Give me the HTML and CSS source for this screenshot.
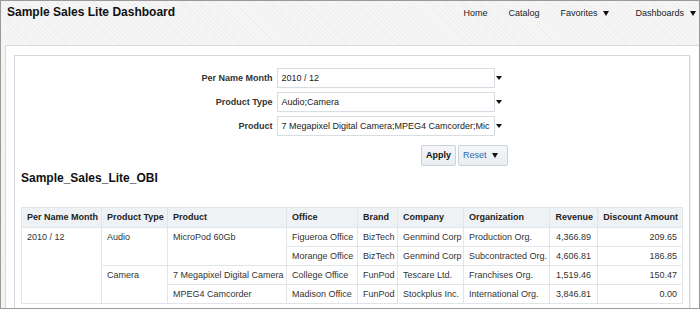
FILE: index.html
```html
<!DOCTYPE html>
<html lang="en">
<head>
    <meta charset="UTF-8">
    <title>Sample Sales Lite Dashboard</title>
    <link rel="stylesheet" href="styles.css">
</head>
<body>
    <div class="frame">
        <div class="header">
            <div class="title">Sample Sales Lite Dashboard</div>
            <div class="nav">
                <span>Home</span>
                <span>Catalog</span>
                <span>Favorites<i class="caret"></i></span>
                <span class="last">Dashboards<i class="caret"></i></span>
            </div>
        </div>

        <div class="panel">
            <div class="box">
                <div class="prompts">
                    <div class="label">Per Name Month</div>
                    <div class="select">2010 / 12</div>
                    <div class="arrow"><i class="caret"></i></div>

                    <div class="label">Product Type</div>
                    <div class="select">Audio;Camera</div>
                    <div class="arrow"><i class="caret"></i></div>

                    <div class="label">Product</div>
                    <div class="select">7 Megapixel Digital Camera;MPEG4 Camcorder;Mic</div>
                    <div class="arrow"><i class="caret"></i></div>

                    <div class="buttons">
                        <span class="button apply">Apply</span>
                        <span class="button reset">Reset<i class="caret"></i></span>
                    </div>
                </div>

                <div class="report-title">Sample_Sales_Lite_OBI</div>

                <table class="pivot">
                    <colgroup>
                        <col style="width: 80px">
                        <col style="width: 66px">
                        <col style="width: 119px">
                        <col style="width: 71px">
                        <col style="width: 40px">
                        <col style="width: 66px">
                        <col style="width: 86px">
                        <col style="width: 48px">
                        <col style="width: 85px">
                    </colgroup>
                    <tr>
                        <th>Per Name Month</th>
                        <th>Product Type</th>
                        <th>Product</th>
                        <th>Office</th>
                        <th>Brand</th>
                        <th>Company</th>
                        <th>Organization</th>
                        <th class="num">Revenue</th>
                        <th class="num">Discount Amount</th>
                    </tr>
                    <tr>
                        <td rowspan="4" class="top">2010 / 12</td>
                        <td rowspan="2" class="top">Audio</td>
                        <td rowspan="2" class="top">MicroPod 60Gb</td>
                        <td>Figueroa Office</td>
                        <td>BizTech</td>
                        <td>Genmind Corp</td>
                        <td>Production Org.</td>
                        <td class="num rev">4,366.89</td>
                        <td class="num">209.65</td>
                    </tr>
                    <tr>
                        <td>Morange Office</td>
                        <td>BizTech</td>
                        <td>Genmind Corp</td>
                        <td>Subcontracted Org.</td>
                        <td class="num rev">4,606.81</td>
                        <td class="num">186.85</td>
                    </tr>
                    <tr>
                        <td rowspan="2" class="top">Camera</td>
                        <td>7 Megapixel Digital Camera</td>
                        <td>College Office</td>
                        <td>FunPod</td>
                        <td>Tescare Ltd.</td>
                        <td>Franchises Org.</td>
                        <td class="num rev">1,519.46</td>
                        <td class="num">150.47</td>
                    </tr>
                    <tr>
                        <td>MPEG4 Camcorder</td>
                        <td>Madison Office</td>
                        <td>FunPod</td>
                        <td>Stockplus Inc.</td>
                        <td>International Org.</td>
                        <td class="num rev">3,846.81</td>
                        <td class="num">0.00</td>
                    </tr>
                </table>
            </div>
        </div>
    </div>
</body>
</html>
```

FILE: styles.css
```css
body {
    margin: 0;
    font-family: "Liberation Sans", Arial, sans-serif;
    font-size: 9px;
    color: #333;
}
.frame {
    width: 700px;
    height: 309px;
    box-sizing: border-box;
    border: 1px solid #9a9a9a;
    overflow: hidden;
    background-color: #f4f4f4;
    background-image: repeating-linear-gradient(45deg, #efefef 0, #efefef 1px, #f6f6f6 1px, #f6f6f6 3px);
}
.header {
    height: 44px;
    box-sizing: border-box;
    padding: 4px 0 0 6px;
    display: flex;
    align-items: baseline;
    justify-content: space-between;
}
.title {
    font-size: 12px;
    line-height: 15px;
    font-weight: bold;
    color: #111;
}
.nav {
    display: flex;
    gap: 21px;
    line-height: 12px;
    color: #222;
    padding-right: 3px;
}
.nav .last {
    margin-left: 5px;
}
.caret {
    display: inline-block;
    width: 0;
    height: 0;
    border-left: 3.5px solid transparent;
    border-right: 3.5px solid transparent;
    border-top: 5px solid #111;
    margin-left: 6px;
    vertical-align: 0;
}
.panel {
    margin-left: 4px;
    height: 300px;
    background: #fff;
    border-top: 1px solid #d3dbe4;
    border-left: 1px solid #d3dbe4;
    overflow: hidden;
}
.box {
    margin: 9px 9px 0 8px;
    padding: 12px 6px 6px 6px;
    border: 1px solid #d2d9e0;
    box-shadow: 1px 1px 0 #e7ecf1;
    background: #fff;
}
.prompts {
    width: 311px;
    margin: 0 auto;
    display: grid;
    grid-template-columns: 76px 218px 9px;
    grid-template-rows: 20px 20px 20px auto;
    column-gap: 4px;
    row-gap: 4px;
}
.prompts .arrow {
    margin-left: -4px;
    width: 13px;
    display: flex;
    align-items: center;
}
.prompts .arrow .caret {
    margin-left: 1px;
    border-top-width: 4.5px;
}
.label {
    text-align: right;
    font-weight: bold;
    line-height: 20px;
    white-space: nowrap;
    color: #333;
}
.select {
    box-sizing: border-box;
    border: 1px solid #d7dde3;
    padding-left: 4px;
    line-height: 18px;
    white-space: nowrap;
    overflow: hidden;
    color: #222;
}
.buttons {
    grid-column: 1 / 4;
    display: flex;
    justify-content: flex-end;
    gap: 2px;
    margin-top: 5px;
}
.button {
    box-sizing: border-box;
    height: 21px;
    line-height: 19px;
    border: 1px solid #cbd2d9;
    border-radius: 2px;
    background: linear-gradient(#f5f7f9, #e9edf1);
}
.apply {
    padding: 0 4px;
    font-weight: bold;
    color: #111;
}
.reset {
    padding: 0 9px 0 4px;
    color: #2a6cb3;
}
.reset .caret {
    margin-left: 5px;
}
.report-title {
    margin-top: 5px;
    font-size: 12px;
    line-height: 15px;
    font-weight: bold;
    color: #111;
}
.pivot {
    margin-top: 21px;
    width: 661px;
    table-layout: fixed;
    border-collapse: collapse;
    border: 1px solid #d6dde4;
}
.pivot th,
.pivot td {
    border: 1px solid #e0e5ea;
    padding: 0 5px;
    text-align: left;
    white-space: nowrap;
    overflow: hidden;
}
.pivot th {
    height: 19px;
    line-height: 19px;
    background: #eff2f5;
    font-weight: bold;
    color: #222;
}
.pivot td {
    height: 18px;
    line-height: 18px;
    color: #333;
}
.pivot td.top {
    vertical-align: top;
}
.pivot .num {
    text-align: right;
}
.pivot th.num {
    padding-right: 4px;
}
.pivot td.rev {
    padding-right: 6px;
}
```
